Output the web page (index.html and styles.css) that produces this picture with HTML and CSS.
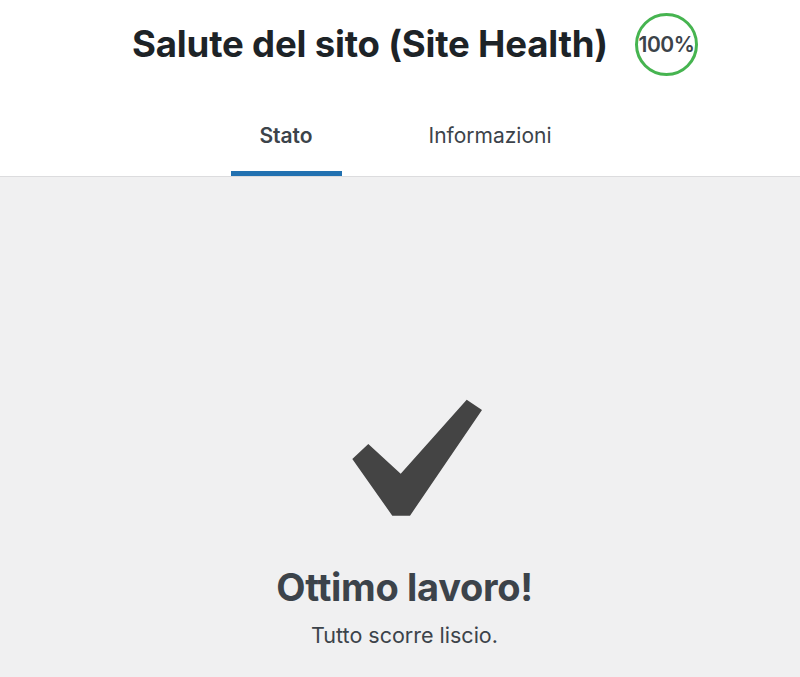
FILE: index.html
```html
<!DOCTYPE html>
<html lang="it">
<head>
  <meta charset="UTF-8" />
  <title>Salute del sito</title>
  <link rel="stylesheet" href="styles.css">
</head>
<body>

  <div class="health-header">
    <div class="title-row">
      <h1>Salute del sito (Site Health)</h1>
      <div class="score">100%</div>
    </div>
    <nav class="tabs">
      <a class="tab active" href="#">Stato</a>
      <a class="tab" href="#">Informazioni</a>
    </nav>
  </div>

  <div class="health-body">
    <svg class="check" width="131" height="118" viewBox="0 0 131 118">
      <polygon points="114.7,0.7 130,11 58,116.7 40.3,116.7 0.3,60 16.3,45 48.7,74.7" fill="#444444" />
    </svg>
    <h2>Ottimo lavoro!</h2>
    <p>Tutto scorre liscio.</p>
  </div>

</body>
</html>
```

FILE: styles.css
```css
body {
  margin: 0;
  font-family: Inter, "Noto Sans", sans-serif;
  background: #f0f0f1;
  color: #3c434a;
}
.health-header {
  background: #fff;
  border-bottom: 1px solid #dcdcde;
}
.title-row {
  display: flex;
  justify-content: center;
  align-items: center;
  gap: 27px;
  padding: 11px 0 0 30px;
  height: 66px;
}
h1 {
  margin: 0;
  font-size: 36.6px;
  font-weight: 700;
  color: #1d2327;
  letter-spacing: -0.2px;
}
.score {
  width: 57px;
  height: 57px;
  border: 3px solid #46b450;
  border-radius: 50%;
  display: flex;
  align-items: center;
  justify-content: center;
  font-size: 21px;
  font-weight: 600;
  color: #3c434a;
  letter-spacing: -0.5px;
}
.tabs {
  display: flex;
  justify-content: center;
  margin-top: 34px;
  padding-right: 18px;
}
.tab {
  display: block;
  text-decoration: none;
  color: #3c434a;
  font-size: 21px;
  padding: 12px 0 23px;
  border-bottom: 5px solid transparent;
  text-align: center;
}
.tab.active {
  width: 111px;
  font-weight: 600;
  border-bottom-color: #2271b1;
}
.tab + .tab {
  margin-left: 87px;
}
.health-body {
  display: flex;
  flex-direction: column;
  align-items: center;
  padding: 222px 0 0 9px;
}
.check {
  margin-left: 26px;
}
h2 {
  margin: 47px 0 0;
  font-size: 38px;
  font-weight: 700;
  color: #3c434a;
  letter-spacing: -0.3px;
}
p {
  margin: 12px 0 0;
  font-size: 21.5px;
}
```
